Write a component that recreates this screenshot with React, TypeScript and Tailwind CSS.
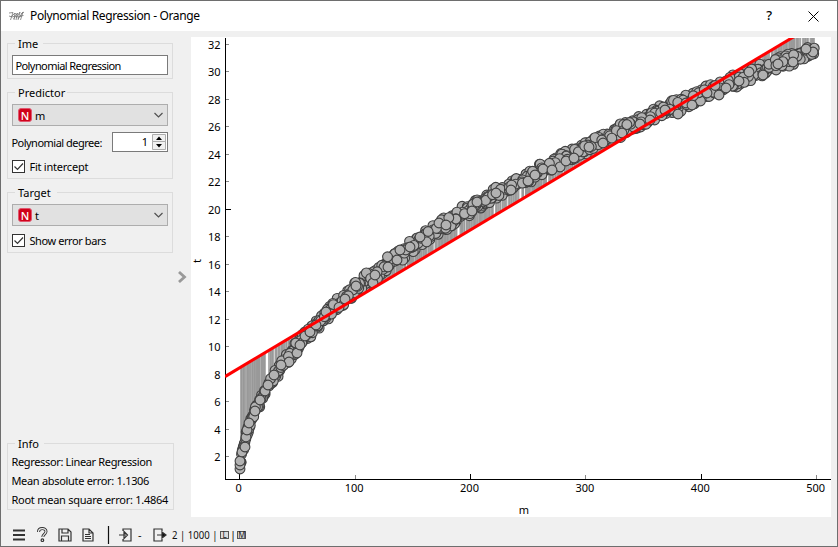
import type { ReactNode } from "react";

const UI_FONT = "font-['Noto_Sans','Open_Sans',sans-serif]";

// plot area is 640x480, offsets are inside the svg
const toX = (m: number) => 48.2 + m * 1.154;
const toY = (t: number) => 447 - t * 13.75;
const fitY = (x: number) => 339.6 - (x - 34) * 0.5975;

function createRandom(seed: number) {
  let state = seed;
  return () => {
    state = (state + 0x6d2b79f5) | 0;
    let r = Math.imul(state ^ (state >>> 15), 1 | state);
    r = (r + Math.imul(r ^ (r >>> 7), 61 | r)) ^ r;
    return ((r ^ (r >>> 14)) >>> 0) / 4294967296;
  };
}

// columns of the plot without any sample
const gaps = [75, 76, 83, 86, 96, 99, 215, 223, 236, 243, 266, 268, 274, 303, 310, 316, 328, 329, 333, 356, 372, 565, 570, 579, 610, 618];

// samples drawn last, given in plot pixels
const topPoints = [
  [49, 432], [49, 428], [49, 424], [51, 415], [54, 410], [55, 400], [56, 393], [58, 386],
  [64, 374], [69, 363], [74, 354], [77, 348], [83, 338], [98, 325], [90, 328],
  [106, 316], [109, 308], [114, 299], [119, 295], [125, 288], [135, 275],
  [154, 262], [165, 249], [182, 246], [184, 238], [197, 230], [206, 223],
  [209, 213], [219, 210], [229, 200], [248, 186], [255, 188], [281, 174],
  [286, 165], [305, 156], [320, 153], [337, 144], [344, 138], [352, 132],
  [361, 133], [375, 124], [383, 121], [398, 110], [412, 106], [431, 96],
  [449, 87], [459, 83], [474, 73], [487, 77], [495, 66], [501, 68], [516, 56],
  [528, 58], [535, 51], [548, 44], [558, 35], [572, 38], [587, 27], [602, 25],
  [622, 15], [615, 12],
];

function buildPoints() {
  const random = createRandom(71);
  const points: number[][] = [];
  for (let i = 0; i < 1000; i++) {
    const m = 0.8 + (i + random() * 1.6) * 0.498;
    const noise = (random() + random() - 1) * (m < 30 ? 0.4 : 0.57);
    const x = toX(m);
    if (gaps.includes(Math.floor(x))) continue;
    points.push([x, toY(Math.sqrt(2 * m) + noise), random()]);
  }
  return points.sort((a, b) => a[2] - b[2]);
}

const points = buildPoints();
const yTicks = [2, 4, 6, 8, 10, 12, 14, 16, 18, 20, 22, 24, 26, 28, 30, 32];
const xTicks = [0, 100, 200, 300, 400, 500];

function Plot() {
  return (
    <svg width="640" height="480" viewBox="0 0 640 480" className="block overflow-visible bg-white text-[11px]">
      <defs>
        <clipPath id="view">
          <rect x="34" y="1" width="606" height="441" />
        </clipPath>
      </defs>
      <g shapeRendering="crispEdges">
        {yTicks.map((t) => (
          <rect key={t} x="35" y={Math.round(toY(t) - 0.5)} width={t % 20 ? 3 : 5} height="1" fill={t % 20 ? "#888" : "#000"} />
        ))}
        {xTicks.map((m) => (
          <rect key={m} x={Math.round(toX(m))} y={m % 200 ? 438 : 437} width="1" height="5" fill={m % 200 ? "#888" : "#000"} />
        ))}
        <rect x="34" y="1" width="1" height="442" />
        <rect x="34" y="442" width="606" height="1" />
      </g>
      {yTicks.map((t) => (
        <text key={t} x="29.5" y={toY(t) + 4.5} textAnchor="end">{t}</text>
      ))}
      {xTicks.map((m) => (
        <text key={m} x={toX(m) - 0.5} y="455" textAnchor="middle">{m}</text>
      ))}
      <text x="333" y="477" textAnchor="middle">m</text>
      <text transform="translate(10 226) rotate(-90)">t</text>
      <g clipPath="url(#view)">
        {points.map(([x, y], i) => (
          <line key={i} x1={x} x2={x} y1={y} y2={fitY(x)} stroke="#999" />
        ))}
        <g fill="#b2b2b2" stroke="#404040" strokeWidth="1.1">
          {points.concat(topPoints).map(([x, y], i) => (
            <circle key={i} cx={x} cy={y} r="4.9" />
          ))}
        </g>
        <line x1="34" x2="640" y1={fitY(34)} y2={fitY(640)} stroke="red" strokeWidth="3" />
      </g>
    </svg>
  );
}

function Group({ title, titleWidth, className, children }: { title: string; titleWidth: string; className: string; children: ReactNode }) {
  return (
    <fieldset className={`relative w-[166px] border border-[#dcdcdc] px-1 ${className}`}>
      <span className={`absolute -top-2 left-[7px] bg-[#f0f0f0] pl-[3px] leading-4 ${titleWidth}`}>{title}</span>
      {children}
    </fieldset>
  );
}

function Label({ width, children }: { width: number; children: string }) {
  return (
    <svg width={width} height="16" className="block shrink-0 overflow-visible">
      <text x="-0.6" y="12.5" textLength={width} lengthAdjust="spacing">{children}</text>
    </svg>
  );
}

function Select({ value }: { value: string }) {
  return (
    <div className="flex h-[22px] w-[156px] items-center border border-[#adadad] bg-[#e1e1e1] pl-[5px] pr-1">
      <span className="flex h-[14px] w-[14px] items-center justify-center rounded-[3px] border border-[#e0566e] bg-[#d0021b] text-[11px] font-medium leading-none text-white">N</span>
      <span className="ml-[3px] flex-1 pt-px leading-4">{value}</span>
      <svg width="9" height="6" viewBox="0 0 9 6" fill="none" stroke="#505050" strokeWidth="1.2">
        <path d="M.5 1l4 4 4-4" />
      </svg>
    </div>
  );
}

function Checkbox({ label, width }: { label: string; width: number }) {
  return (
    <div className="flex h-4 items-center gap-[5px]">
      <svg width="13" height="13" viewBox="0 0 13 13" fill="#fff" stroke="#333">
        <rect x=".5" y=".5" width="12" height="12" />
        <path d="M2.5 6.5l3 3 5.5-6" fill="none" strokeWidth="1.2" />
      </svg>
      <Label width={width}>{label}</Label>
    </div>
  );
}

function StatusBar() {
  return (
    <footer className="flex h-[29px] items-center pl-[11px] pt-[6px]">
      <svg width="240" height="20" viewBox="12 525 240 20" fill="none" stroke="#333" strokeWidth="1.2">
        <path d="M13 530.5h12M13 535h12M13 539.5h12" strokeWidth="2" />
        <path d="M38.5 532c0-4.5 7.5-4.5 7.5-.5 0 2.5-3.2 2.7-3.2 5.5" strokeWidth="3" />
        <path d="M38.5 532c0-4.5 7.5-4.5 7.5-.5 0 2.5-3.2 2.7-3.2 5.5" stroke="#f0f0f0" />
        <circle cx="42.4" cy="540.2" r="1.3" />
        <path d="M59 529h9l3 3v9H59zM62 529v4h6v-4M61.5 541v-5h7v5" />
        <path d="M83 529h6l4 4v8H83zM89 529v4h4M85 534.5h5M85 536.5h6M85 538.5h6" />
        <path d="M108.5 526v18" stroke="#111" />
        <path d="M123 531v-2h8v12h-8v-2M119 535h7M124 531.5l3.5 3.5-3.5 3.5z" />
        <path d="M162 531v-2h-8v12h8v-2M157 535h7" />
        <path d="M162 532l4 3-4 3z" fill="#111" />
        <g fill="#111" stroke="none">
          <text x="138" y="539">-</text>
          <text x="172" y="539" textLength="45.500" lengthAdjust="spacingAndGlyphs">2 | 1000 |</text>
          <text x="230" y="539">|</text>
        </g>
        <g stroke="#555" strokeWidth="1" fill="#ddd">
          <rect x="220.5" y="531.5" width="8" height="7" />
          <rect x="237.5" y="531.5" width="8" height="7" />
        </g>
        <g fill="#222" stroke="none" fontSize="8">
          <text x="222.5" y="538">L</text>
          <text x="238.3" y="538">M</text>
        </g>
      </svg>
    </footer>
  );
}

export default function App() {
  return (
    <div className={`flex h-[547px] w-[838px] flex-col overflow-hidden border border-[#6e6e6e] bg-[#f0f0f0] text-[11px] text-black ${UI_FONT}`}>
      <header className="flex h-[30px] shrink-0 items-center bg-white pl-2 pr-[18px]">
        <svg width="16" height="10" viewBox="0 0 16 10" fill="none" stroke="#777">
          <path d="M0 2l4-.5L1.500 9M2 6l4-4-1 7M4.500 8l4-6-1.500 7M7 7l4-6-2 8M9 8l5-7-2.500 8M12 3l3-2M11 5l3.500-.5M6 2.500l2 1M0 5l3 1 3-1 3 1 4-1" strokeWidth=".8" />
        </svg>
        <svg width="172" height="18" className="ml-[5px] text-[12px]">
          <text x="0" y="13" textLength="170">Polynomial Regression - Orange</text>
        </svg>
        <span className="ml-auto mr-9 text-[13px] font-medium">?</span>
        <svg width="11" height="11" viewBox="0 0 11 11" stroke="#000">
          <path d="M.5.5l10 10M10.500.5l-10 10" />
        </svg>
      </header>

      <div className="flex h-[486px] shrink-0">
        <aside className="flex w-[172px] flex-col pl-1.5 pt-3">
          <Group title="Ime" titleWidth="w-[28px]" className="h-[36px] pt-[11px]">
            <div className="flex h-5 w-[156px] items-center border border-[#7a7a7a] bg-white pl-[3px]">
              <Label width={106}>Polynomial Regression</Label>
            </div>
          </Group>
          <Group title="Predictor" titleWidth="w-[52px]" className="mt-[13px] h-[87px] pt-[11px]">
            <Select value="m" />
            <div className="mt-1.5 flex items-center justify-between">
              <Label width={91}>Polynomial degree:</Label>
              <div className="flex h-5 w-[56px] items-center justify-end border border-[#7a7a7a] bg-white">
                <span className="mr-1 pt-px">1</span>
                <svg width="15" height="18" viewBox="0 0 15 18" fill="#f0f0f0" stroke="#adadad">
                  <path d="M.5 1.500h13v7H.5zM.5 8.500h13v8H.5z" />
                  <path d="M4 7l3-3.500L10 7zM4 11l3 3.500 3-3.500z" fill="#000" stroke="none" />
                </svg>
              </div>
            </div>
            <div className="mt-1.5">
              <Checkbox label="Fit intercept" width={59} />
            </div>
          </Group>
          <Group title="Target" titleWidth="w-[42px]" className="mt-[13px] h-[61px] pt-[11px]">
            <Select value="t" />
            <div className="mt-1.5">
              <Checkbox label="Show error bars" width={77} />
            </div>
          </Group>
          <Group title="Info" titleWidth="w-[29px]" className="mb-[7px] mt-auto h-[67px] pt-[9px]">
            <div className="flex flex-col gap-[3px]">
              <Label width={141}>Regressor: Linear Regression</Label>
              <Label width={138}>Mean absolute error: 1.1306</Label>
              <Label width={157}>Root mean square error: 1.4864</Label>
            </div>
          </Group>
        </aside>
        <div className="flex w-[18px] items-center justify-center pt-[5px]">
          <svg width="10" height="12" viewBox="0 0 10 12" fill="none" stroke="#999" strokeWidth="2.8">
            <path d="M2 1l5.500 5L2 11" />
          </svg>
        </div>
        <main className="pt-[6px]">
          <Plot />
        </main>
      </div>
      <StatusBar />
    </div>
  );
}
